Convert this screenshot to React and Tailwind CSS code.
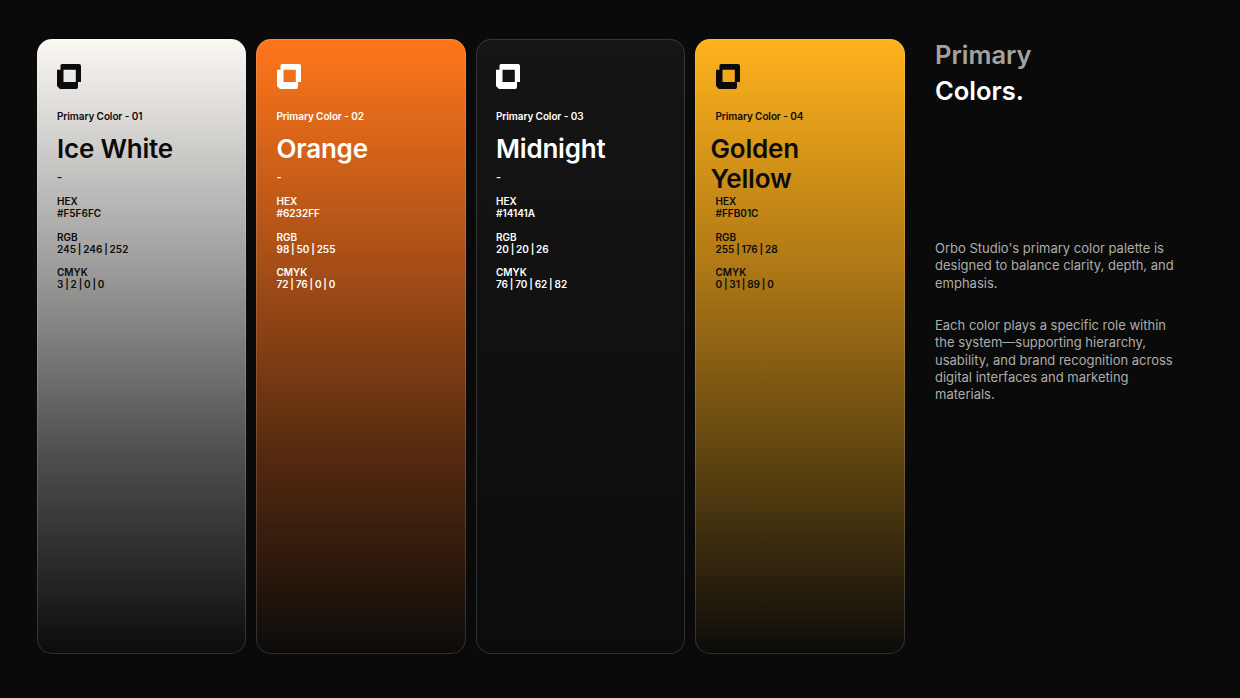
const CARDS = [
  {
    label: "Primary Color - 01",
    name: ["Ice White"],
    hex: "#F5F6FC",
    rgb: "245 | 246 | 252",
    cmyk: "3 | 2 | 0 | 0",
    text: "text-[#0b0b0b]",
    bg: "bg-[linear-gradient(180deg,#fbf8f4_0%,#a8a7a6_33%,#525252_66%,#0c0c0c_100%)]",
  },
  {
    label: "Primary Color - 02",
    name: ["Orange"],
    hex: "#6232FF",
    rgb: "98 | 50 | 255",
    cmyk: "72 | 76 | 0 | 0",
    text: "text-white",
    bg: "bg-[linear-gradient(180deg,#ff761b_0%,#a84f17_36%,#54290f_68%,#0c0b0a_100%)]",
  },
  {
    label: "Primary Color - 03",
    name: ["Midnight"],
    hex: "#14141A",
    rgb: "20 | 20 | 26",
    cmyk: "76 | 70 | 62 | 82",
    text: "text-white",
    bg: "bg-[linear-gradient(180deg,#151516_0%,#0c0c0c_100%)]",
  },
  {
    label: "Primary Color - 04",
    name: ["Golden", "Yellow"],
    hex: "#FFB01C",
    rgb: "255 | 176 | 28",
    cmyk: "0 | 31 | 89 | 0",
    text: "text-[#0b0b0b]",
    bg: "bg-[linear-gradient(180deg,#ffb21c_0%,#b17a16_36%,#5f4410_68%,#0c0b0a_100%)]",
  },
];

function Logo() {
  return (
    <svg width="24" height="25" viewBox="0 0 24 25" fill="currentColor">
      <path
        fillRule="evenodd"
        d="M3.5 1.5Q3.5 0 5 0H22Q24 0 24 2V18H21V23Q21 25 19 25H3L0 22V5.7H3.5ZM6.5 5.7V18H18.8V5.7Z"
      />
    </svg>
  );
}

function Spec({ title, value }) {
  return (
    <div className="text-[10px] leading-[12px] font-semibold [word-spacing:-0.7px]">
      <div>{title}</div>
      <div>{value}</div>
    </div>
  );
}

function Card({ card }) {
  const twoLine = card.name.length > 1;
  return (
    <div className={`w-[209.5px] h-[615px] shrink-0 rounded-[15px] border border-white/15 bg-origin-border pl-[19.5px] pr-4 pt-[24px] ${card.bg} ${card.text}`}>
      <Logo />
      <div className="mt-[21px] text-[10px] leading-[13px] font-semibold tracking-[-0.1px]">{card.label}</div>
      <div className={`mt-[11px] text-[26px] leading-[30px] font-semibold tracking-[-0.2px] ${twoLine ? "-ml-[5px]" : ""}`}>
        {card.name.map((line) => (
          <div key={line}>{line}</div>
        ))}
      </div>
      {twoLine ? (
        <div className="h-[1px]" />
      ) : (
        <div className="mt-[7px] h-[24px] text-[11px] leading-[13px] font-semibold">-</div>
      )}
      <div className="flex flex-col gap-[11.5px]">
        <Spec title="HEX" value={card.hex} />
        <Spec title="RGB" value={card.rgb} />
        <Spec title="CMYK" value={card.cmyk} />
      </div>
    </div>
  );
}

export default function App() {
  return (
    <div className="w-[1240px] h-[698px] overflow-hidden bg-[#0a0a0a] flex pl-[36.5px] pt-[39px] font-['Inter',sans-serif]">
      <div className="flex gap-[10px]">
        {CARDS.map((card) => (
          <Card key={card.label} card={card} />
        ))}
      </div>
      <div className="ml-[30.5px] w-[245px]">
        <h1 className="-mt-[2px] text-[25.5px] leading-[36px] font-semibold text-[#a3a2a0]">
          Primary
          <br />
          <span className="text-white">Colors.</span>
        </h1>
        <div className="mt-[131px] flex flex-col gap-[24.5px] text-[13px] leading-[17.4px] text-[#adadab]">
          <p>Orbo Studio's primary color palette is designed to balance clarity, depth, and emphasis.</p>
          <p>Each color plays a specific role within the system—supporting hierarchy, usability, and brand recognition across digital interfaces and marketing materials.</p>
        </div>
      </div>
    </div>
  );
}
